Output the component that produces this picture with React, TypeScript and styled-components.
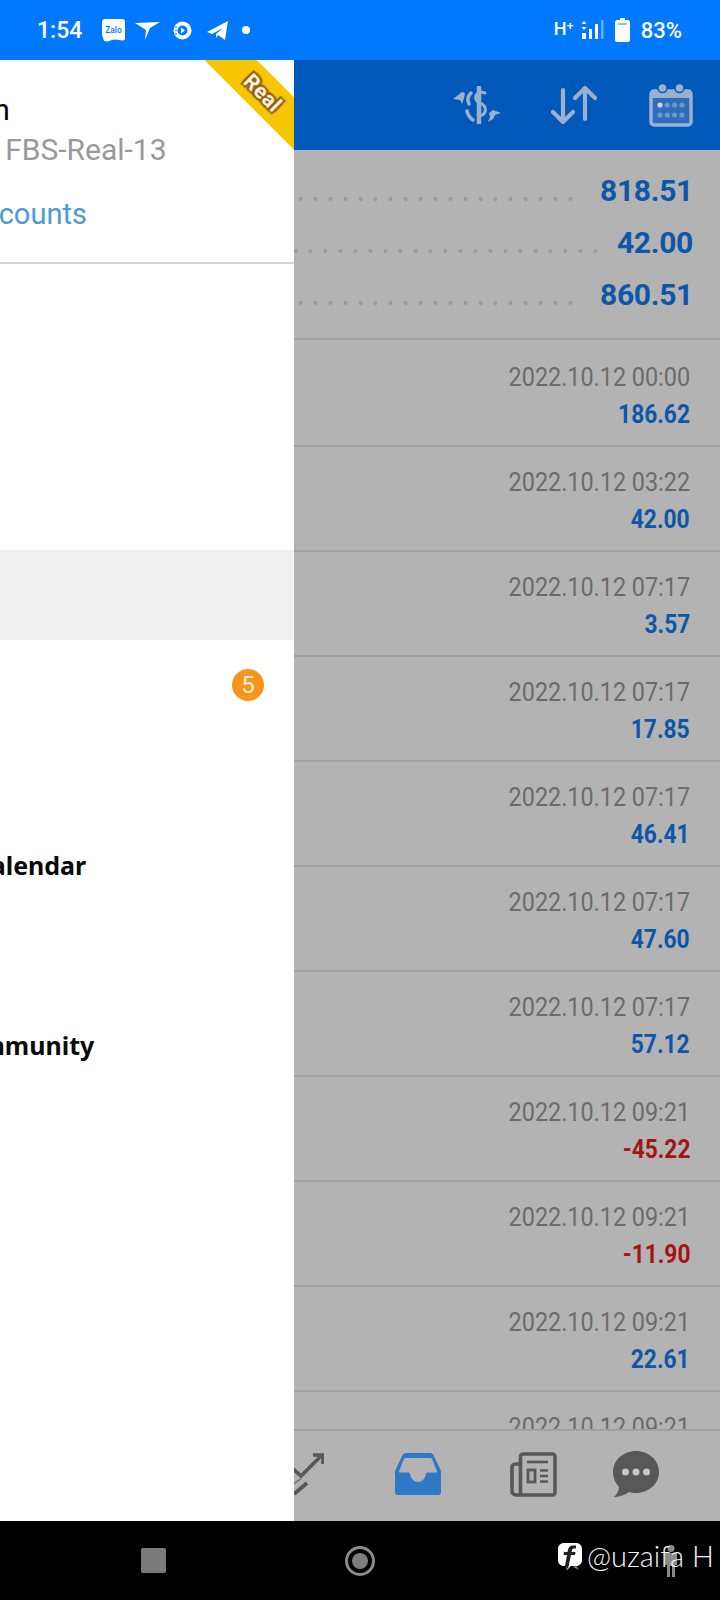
import React from "react";
import styled, { createGlobalStyle } from "styled-components";

const Global = createGlobalStyle`
  html, body { margin: 0; padding: 0; background: #000; }
  * { box-sizing: border-box; }
  body { font-family: Roboto, "Liberation Sans", sans-serif; }
`;

const Page = styled.div`
  width: 720px;
  height: 1600px;
  display: flex;
  flex-direction: column;
  overflow: hidden;
`;

const StatusBar = styled.div`
  height: 60px;
  flex: none;
  background: #0078ff;
  color: #fff;
  display: flex;
  align-items: center;
  padding: 0 38px 0 37px;
  font-size: 23px;
  font-weight: 500;
`;
const StatusIcons = styled.div`
  display: flex;
  align-items: center;
  margin-left: 20px;
  flex: 1;
`;
const Glyph = styled.span<{ $gap: number }>`
  display: flex;
  margin-left: ${(p) => p.$gap}px;
`;
const StatusRight = styled.div`
  display: flex;
  align-items: center;
`;
const NetLabel = styled.span`
  font-size: 18px;
  margin-right: 7px;
  margin-top: -4px;
`;
const Percent = styled.span`
  margin-left: 11px;
  font-size: 22px;
`;

const Middle = styled.div`
  flex: 1;
  display: flex;
  min-height: 0;
`;

const Drawer = styled.aside`
  flex: 0 0 294px;
  position: relative;
  overflow: hidden;
  background: #fff;
`;
const DrawerInner = styled.div`
  width: 600px;
  margin-left: -306px;
`;
const DrawerHeader = styled.div`
  height: 204px;
  border-bottom: 2px solid #d6d6d6;
  padding: 30px 0 0 200px;
`;
const UserName = styled.div`
  font-size: 30px;
  line-height: 40px;
  color: #000;
  margin-left: -78px;
  white-space: nowrap;
`;
const Server = styled.div`
  font-size: 30px;
  line-height: 40px;
  margin-left: -30px;
  color: #999;
  white-space: nowrap;
`;
const Manage = styled.div`
  font-size: 29px;
  line-height: 40px;
  margin: 24px 0 0 -38px;
  color: #4c9ad6;
  white-space: nowrap;
`;
const Ribbon = styled.div`
  position: absolute;
  top: 0;
  right: 0;
  width: 140px;
  height: 140px;
  overflow: hidden;
  pointer-events: none;
`;
const RibbonBand = styled.div`
  position: absolute;
  left: 34px;
  top: 13.5px;
  width: 150px;
  height: 37px;
  transform: rotate(45deg);
  background: #f6c700;
  display: flex;
  align-items: center;
  justify-content: center;
  color: #fff3dc;
  font-size: 21px;
  font-weight: 700;
  letter-spacing: 0.5px;
  text-shadow: 0 0 3px #99621f, 0 0 3px #99621f, 2px 2px 1px #99621f, -2px -2px 1px #99621f, 2px -2px 1px #99621f, -2px 2px 1px #99621f;
`;

const Menu = styled.nav`
  padding-top: 16px;
`;
const MenuRow = styled.div<{ $active?: boolean }>`
  height: 90px;
  display: flex;
  align-items: center;
  padding: 0 30px 0 155px;
  background: ${(p) => (p.$active ? "#f0f0f0" : "transparent")};
  font-family: "Noto Sans", "Open Sans", sans-serif;
  font-size: 25px;
  font-weight: 700;
  color: #0a0a0a;
  white-space: nowrap;
`;
const MenuLabel = styled.span`
  flex: 1;
`;
const Badge = styled.span`
  width: 32px;
  height: 32px;
  border-radius: 50%;
  background: #f7941d;
  color: #ffeeda;
  display: flex;
  align-items: center;
  justify-content: center;
  font-family: Roboto, sans-serif;
  font-size: 24px;
  font-weight: 400;
`;

const Main = styled.main`
  flex: 1;
  min-width: 0;
  overflow: hidden;
  display: flex;
  flex-direction: column;
  background: #b3b3b3;
`;
const TopBar = styled.header`
  height: 90px;
  flex: none;
  background: #0058b8;
  display: flex;
  align-items: center;
  justify-content: flex-end;
  padding: 0 27px 0 0;
`;
const TopIcon = styled.span<{ $gap: number }>`
  display: flex;
  margin-left: ${(p) => p.$gap}px;
`;

const Summary = styled.section`
  height: 190px;
  flex: none;
  padding-top: 14px;
  border-bottom: 2px solid #a1a1a1;
`;
const SummaryRow = styled.div`
  height: 52px;
  display: flex;
  align-items: center;
  padding-right: 27px;
`;
const Leader = styled.div<{ $gap: number }>`
  flex: 1;
  height: 4px;
  margin-top: 18px;
  margin-right: ${(p) => p.$gap}px;
  background: radial-gradient(circle, #9d9d9d 1.8px, transparent 2.2px) right center / 15px 4px repeat-x;
`;
const SummaryValue = styled.span`
  font-size: 30px;
  font-weight: 700;
  letter-spacing: -0.3px;
  color: #0d56a8;
`;

const List = styled.div`
  flex: 1;
  min-height: 0;
  overflow: hidden;
  padding-top: 2px;
`;
const Row = styled.div`
  height: 105px;
  padding: 17px 30px 0 0;
  border-bottom: 2px solid #a1a1a1;
  display: flex;
  flex-direction: column;
  align-items: flex-end;
`;
const DateText = styled.span`
  display: block;
  font-size: 25px;
  line-height: 37px;
  color: #6b6b6b;
  white-space: nowrap;
  transform: scaleX(0.935);
  transform-origin: right center;
`;
const Amount = styled.span<{ $loss: boolean }>`
  display: block;
  font-size: 25px;
  line-height: 37px;
  font-weight: 700;
  color: ${(p) => (p.$loss ? "#a31515" : "#0d56a8")};
  white-space: nowrap;
  transform: scaleX(0.91);
  transform-origin: right center;
`;

const TabBar = styled.div`
  height: 92px;
  flex: none;
  border-top: 2px solid #a1a1a1;
  padding-bottom: 4px;
  display: flex;
  align-items: center;
`;
const Tab = styled.div<{ $gap: number }>`
  display: flex;
  margin-left: ${(p) => p.$gap}px;
`;

const SystemBar = styled.footer`
  height: 79px;
  flex: none;
  background: #000;
  position: relative;
  display: flex;
  align-items: center;
  padding-left: 141px;
`;
const StopKey = styled.div`
  width: 25px;
  height: 25px;
  background: #7b7b7b;
  border-radius: 2px;
  margin-right: 179px;
`;
const HomeKey = styled.div`
  width: 30px;
  height: 30px;
  border-radius: 50%;
  border: 3px solid #8a8a8a;
  display: flex;
  align-items: center;
  justify-content: center;
  margin-right: 182px;
  &::after {
    content: "";
    width: 16px;
    height: 16px;
    border-radius: 50%;
    background: #7d7d7d;
  }
`;
const Watermark = styled.div`
  position: relative;
  z-index: 1;
  display: flex;
  align-items: center;
  gap: 4px;
  color: #f5f5f5;
  font-family: Lato, Roboto, sans-serif;
  font-size: 29px;
  font-weight: 300;
  white-space: nowrap;
  margin-top: -8px;
`;
const WatermarkText = styled.span`
  margin-top: -3px;
`;
const Person = styled.div`
  position: absolute;
  left: 665px;
  top: 24px;
  display: flex;
`;

const rows: [string, string][] = [
  ["2022.10.12 00:00", "186.62"],
  ["2022.10.12 03:22", "42.00"],
  ["2022.10.12 07:17", "3.57"],
  ["2022.10.12 07:17", "17.85"],
  ["2022.10.12 07:17", "46.41"],
  ["2022.10.12 07:17", "47.60"],
  ["2022.10.12 07:17", "57.12"],
  ["2022.10.12 09:21", "-45.22"],
  ["2022.10.12 09:21", "-11.90"],
  ["2022.10.12 09:21", "22.61"],
  ["2022.10.12 09:21", ""],
];

const menu = ["Quotes", "Charts", "Trade", "History", "Mailbox", "News", "Economic Calendar", "Signals", "Traders Community"];

const ICON = "#9ab0cd";

const DollarSwap = () => (
  <svg width="50" height="38" viewBox="0 0 50 38" fill="none" stroke={ICON} strokeLinecap="round">
    <path d="M27 1.500v35" strokeWidth="4.500" />
    <path d="M33 7c-3-1-6-1-8 1-2 2-2 6 1 8l4 2c3 2 4 5 3 8-1 3-4 4-7 3" strokeWidth="3" />
    <path d="M19 7c-3 3-4 7-2 11M15 25c1 4 3 7 6 9" strokeWidth="3.500" />
    <path d="M1 13l9-7 3 1-1 5-2 6-2-4z" fill={ICON} stroke="none" />
    <path d="M49 27l-8-3-4 3 1 4-2 5 5-3 2-4z" fill={ICON} stroke="none" />
  </svg>
);
const SortArrows = () => (
  <svg width="46" height="38" viewBox="0 0 46 38" fill="none" stroke={ICON} strokeWidth="4.200" strokeLinecap="round" strokeLinejoin="round">
    <path d="M12 4v32M2 26l10 10 10-10" />
    <path d="M34 33V2M24 12L34 2l10 10" />
  </svg>
);
const CalendarIcon = () => (
  <svg width="44" height="44" viewBox="0 0 44 44" fill="none">
    <rect x="2" y="8" width="40" height="34" rx="3" fill="#2d6dbb" stroke={ICON} strokeWidth="3.500" />
    <rect x="2" y="7" width="40" height="8" fill={ICON} />
    <circle cx="13.500" cy="5" r="4.500" fill={ICON} stroke="#0058b8" strokeWidth="1.500" />
    <circle cx="30.500" cy="5" r="4.500" fill={ICON} stroke="#0058b8" strokeWidth="1.500" />
    {[0, 1, 2, 3].map((i) =>
      [22, 32].map((y) => <circle key={`${i}-${y}`} cx={11 + i * 7.300} cy={y} r="2.600" fill={i === 0 && y === 22 ? "#c9d4e4" : "#6f97c7"} />)
    )}
  </svg>
);
const ChartTab = () => (
  <svg width="46" height="44" viewBox="0 0 46 44" fill="none" stroke="#585858" strokeWidth="3.600">
    <path d="M14 16l9 8L44 3M35 3h10v9" />
    <path d="M15 32l8-5" strokeWidth="2" stroke="#7c7c7c" />
    <path d="M16 42l13-11" strokeWidth="4" />
  </svg>
);
const InboxTab = () => (
  <svg width="46" height="42" viewBox="0 0 46 42">
    <path d="M11 0h24c2 0 3 1 4 3l7 15v21c0 2-1 3-3 3H3c-2 0-3-1-3-3V18L7 3c1-2 2-3 4-3z" fill="#2f78c8" />
    <path d="M11 5h24c1 0 2 .5 2.500 2L42 18.500c0 .5 0 1-1 1h-8c-1 0-1.500.5-2 1.500-1 5-4 8-8 8s-7-3-8-8c-.5-1-1-1.500-2-1.500H5c-1 0-1-.5-1-1L8.500 7C9 5.500 10 5 11 5z" fill="#b3b3b3" />
  </svg>
);
const NewsTab = () => (
  <svg width="47" height="45" viewBox="0 0 47 45" fill="none" stroke="#585858" strokeWidth="3.600">
    <rect x="10.500" y="2" width="34.500" height="41" rx="2.500" />
    <path d="M9 12H6c-2 0-4 1-4 3v24c0 3 2 4 5 4h5" />
    <path d="M17 10h21" strokeWidth="2.600" />
    <rect x="18" y="18" width="7" height="12" strokeWidth="2.800" />
    <path d="M30 18.500h8M30 24h8M30 29.500h8" strokeWidth="2.600" />
  </svg>
);
const ChatTab = () => (
  <svg width="46" height="46" viewBox="0 0 46 46">
    <path d="M23 0c12.500 0 23 9 23 21s-10.500 21-23 21c-3 0-5-.3-7-1-4 3-9 4.500-15 5 3-3 5-6 5-10C2 32 0 27 0 21 0 9 10.500 0 23 0z" fill="#585858" />
    <circle cx="12.500" cy="21" r="3.500" fill="#c6c6c6" />
    <circle cx="23" cy="21" r="3.500" fill="#c6c6c6" />
    <circle cx="33.500" cy="21" r="3.500" fill="#c6c6c6" />
  </svg>
);

export default function App() {
  return (
    <Page>
      <Global />
      <StatusBar>
        1:54
        <StatusIcons>
          <Glyph $gap={0}>
            <svg width="23" height="23" viewBox="0 0 23 23">
              <path d="M3 0h17c1.500 0 3 1 3 2.500v17c0 1-1 2-2 2-3 0-5-1-7.500-1-4 0-6 2-9 2-2 0-2.500-1-3-2l-.5-2C.500 17.500 0 16.500 0 15V2.500C0 1 1.500 0 3 0z" fill="#fff" />
              <text x="11.500" y="13.500" textAnchor="middle" fontSize="8.500" fontWeight="500" fontFamily="Roboto, sans-serif" fill="#0078ff">Zalo</text>
            </svg>
          </Glyph>
          <Glyph $gap={10}>
            <svg width="25" height="19" viewBox="0 0 25 19">
              <path d="M0 2l25-1-10 6-5 12 1-10z" fill="#fff" />
            </svg>
          </Glyph>
          <Glyph $gap={13}>
            <svg width="19" height="19" viewBox="0 0 19 19">
              <circle cx="9.500" cy="9.500" r="9" fill="#fff" />
              <circle cx="9.500" cy="9.500" r="5" fill="#0078ff" />
              <path d="M8 6.500l4 3-4 3z" fill="#fff" />
              <path d="M3 5v9" stroke="#0078ff" strokeWidth="1" strokeDasharray="2 1.500" />
            </svg>
          </Glyph>
          <Glyph $gap={15}>
            <svg width="21" height="19" viewBox="0 0 21 19">
              <path d="M0 11L21 0l-3 19-7-5-2 3v-4l7-6-11 6z" fill="#fff" />
            </svg>
          </Glyph>
          <Glyph $gap={14}>
            <svg width="8" height="8" viewBox="0 0 8 8">
              <circle cx="4" cy="4" r="4" fill="#fff" />
            </svg>
          </Glyph>
        </StatusIcons>
        <StatusRight>
          <NetLabel>H⁺</NetLabel>
          <svg width="23" height="22" viewBox="0 0 23 22">
            <path d="M3 2l2.500 3h-5zM3 11L.500 8h5z" fill="#fff" />
            <rect x="1" y="14" width="4" height="6" fill="#fff" />
            <rect x="8" y="10" width="3" height="10" fill="#fff" />
            <rect x="14" y="5" width="3" height="15" fill="#fff" />
            <rect x="20" y="1" width="2.500" height="19" fill="#66aeff" />
          </svg>
          <Glyph $gap={11}>
            <svg width="15" height="24" viewBox="0 0 15 24">
              <path d="M5 0h5v2h3c1 0 2 1 2 2v18c0 1-1 2-2 2H2c-1 0-2-1-2-2V4c0-1 1-2 2-2h3z" fill="#fff" />
              <rect x="3" y="5" width="9" height="2" fill="#8ac0ff" />
            </svg>
          </Glyph>
          <Percent>83%</Percent>
        </StatusRight>
      </StatusBar>
      <Middle>
        <Drawer>
          <DrawerInner>
            <DrawerHeader>
              <UserName>Uzaifa Hassan</UserName>
              <Server>1234567 - FBS-Real-13</Server>
              <Manage>Manage accounts</Manage>
            </DrawerHeader>
            <Menu>
              {menu.map((m) => (
                <MenuRow key={m} $active={m === "History"}>
                  <MenuLabel>{m}</MenuLabel>
                  {m === "Mailbox" && <Badge>5</Badge>}
                </MenuRow>
              ))}
            </Menu>
          </DrawerInner>
          <Ribbon>
            <RibbonBand>Real</RibbonBand>
          </Ribbon>
        </Drawer>
        <Main>
          <TopBar>
            <TopIcon $gap={0}>
              <DollarSwap />
            </TopIcon>
            <TopIcon $gap={49}>
              <SortArrows />
            </TopIcon>
            <TopIcon $gap={52}>
              <CalendarIcon />
            </TopIcon>
          </TopBar>
          <Summary>
            <SummaryRow>
              <Leader $gap={22} />
              <SummaryValue>818.51</SummaryValue>
            </SummaryRow>
            <SummaryRow>
              <Leader $gap={14} />
              <SummaryValue>42.00</SummaryValue>
            </SummaryRow>
            <SummaryRow>
              <Leader $gap={22} />
              <SummaryValue>860.51</SummaryValue>
            </SummaryRow>
          </Summary>
          <List>
            {rows.map(([d, v], i) => (
              <Row key={i}>
                <DateText>{d}</DateText>
                <Amount $loss={v.startsWith("-")}>{v}</Amount>
              </Row>
            ))}
          </List>
          <TabBar>
            <Tab $gap={-16}>
              <ChartTab />
            </Tab>
            <Tab $gap={71}>
              <InboxTab />
            </Tab>
            <Tab $gap={69}>
              <NewsTab />
            </Tab>
            <Tab $gap={56}>
              <ChatTab />
            </Tab>
          </TabBar>
        </Main>
      </Middle>
      <SystemBar>
        <StopKey />
        <HomeKey />
        <Watermark>
          <svg width="26" height="29" viewBox="0 0 26 29">
            <path d="M16 25l6 3-3-5z" fill="#777" />
            <path d="M7 1h12c3.500 0 6 2.500 6 6v11c0 3.500-2.500 6-6 6h-5l-4 4-1-4H7c-3.500 0-6-2.500-6-6V7c0-3.500 2.500-6 6-6z" fill="#fff" />
            <path d="M11 27l3-14h4l.5-3h-4l.5-2c.2-1 1-1.500 2-1.500h2L19 3.500h-3c-3 0-4.500 1.500-5 4.500l-.5 2H7l-.5 3H10L8 24z" fill="#222" />
          </svg>
          <WatermarkText>@uzaifa H</WatermarkText>
        </Watermark>
        <Person>
          <svg width="12" height="32" viewBox="0 0 12 32">
            <circle cx="6" cy="3.500" r="3.500" fill="#8a8a8a" />
            <path d="M0 8h12v12h-2v12H7V21H5v11H2V20H0z" fill="#8a8a8a" />
          </svg>
        </Person>
      </SystemBar>
    </Page>
  );
}
